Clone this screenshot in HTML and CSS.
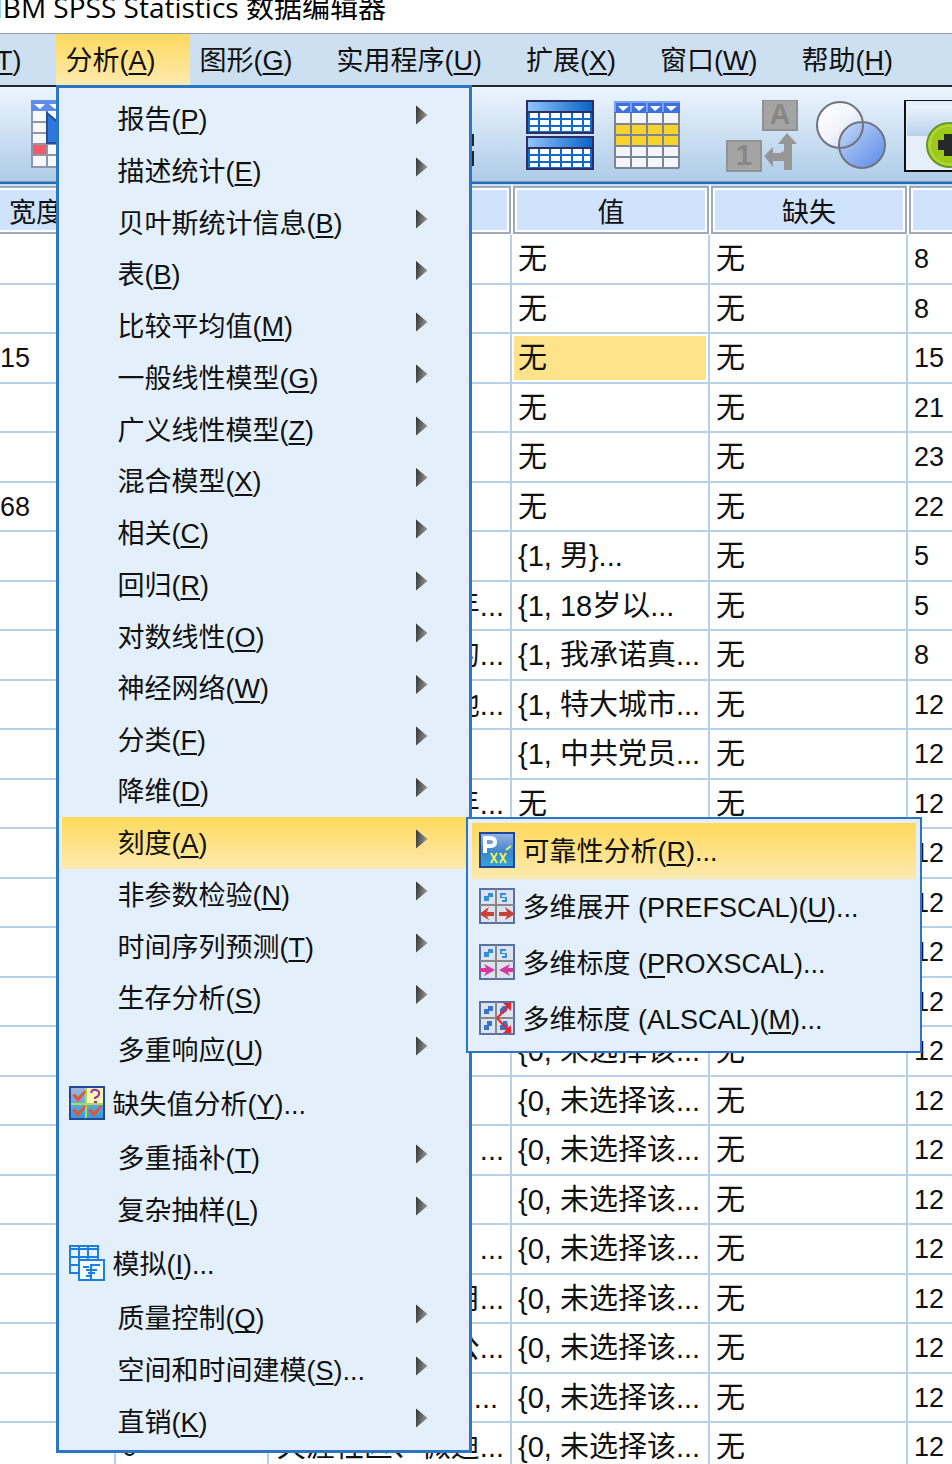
FILE: index.html
```html
<!DOCTYPE html>
<html lang="zh-CN">
<head>
<meta charset="utf-8">
<title>IBM SPSS Statistics 数据编辑器</title>
<link rel="stylesheet" href="styles.css">
</head>
<body>
<div class="window">
<header class="titlebar">IBM SPSS Statistics 数据编辑器</header>

<nav>
<ul class="menubar">
  <li><button class="menubar-item">转换(<u>T</u>)</button></li>
  <li class="open"><button class="menubar-item">分析(<u>A</u>)</button>
    <ul class="menu">
      <li><button class="item sub"><span>报告(<u>P</u>)</span></button></li>
      <li><button class="item sub"><span>描述统计(<u>E</u>)</span></button></li>
      <li><button class="item sub"><span>贝叶斯统计信息(<u>B</u>)</span></button></li>
      <li><button class="item sub short"><span>表(<u>B</u>)</span></button></li>
      <li><button class="item sub"><span>比较平均值(<u>M</u>)</span></button></li>
      <li><button class="item sub"><span>一般线性模型(<u>G</u>)</span></button></li>
      <li><button class="item sub"><span>广义线性模型(<u>Z</u>)</span></button></li>
      <li><button class="item sub short"><span>混合模型(<u>X</u>)</span></button></li>
      <li><button class="item sub"><span>相关(<u>C</u>)</span></button></li>
      <li><button class="item sub"><span>回归(<u>R</u>)</span></button></li>
      <li><button class="item sub"><span>对数线性(<u>O</u>)</span></button></li>
      <li><button class="item sub short"><span>神经网络(<u>W</u>)</span></button></li>
      <li><button class="item sub"><span>分类(<u>F</u>)</span></button></li>
      <li><button class="item sub short"><span>降维(<u>D</u>)</span></button></li>
      <li class="has-submenu"><button class="item sub selected"><span>刻度(<u>A</u>)</span></button>
        <ul class="menu submenu">
          <li><button class="item with-icon selected">
            <svg class="icon" viewBox="0 0 36 36"><defs><linearGradient id="rel" x1="0" y1="0" x2="0" y2="1"><stop offset="0" stop-color="#9ab4e4"/><stop offset=".55" stop-color="#3f86cc"/><stop offset="1" stop-color="#35a3d8"/></linearGradient></defs><rect x="1" y="1" width="34" height="34" fill="url(#rel)" stroke="#1b489c" stroke-width="2"/><path d="M6 21V6h5q5 0 5 4t-5 4H8" fill="none" stroke="#fff" stroke-width="4"/><path d="M12 21l6 10M18 21l-6 10M21 21l6 10M27 21l-6 10M27 18l5-4" fill="none" stroke="#e9f25a" stroke-width="2"/></svg>
            <span>可靠性分析(<u>R</u>)...</span></button></li>
          <li><button class="item with-icon">
            <svg class="icon" viewBox="0 0 36 36"><rect x="1" y="1" width="34" height="34" fill="#dce3ef" stroke="#5a71a2" stroke-width="2"/><path d="M17 1v34M1 17h34" stroke="#888" stroke-width="2"/><path d="M5 8h4V5h5v4h-4v4H5zM21 5h6v2h-4v2h5v5h-5v-2h3v-2h-5z" fill="#3190da"/><path d="M0 26l10-7-2 5h7v4H8l2 4zM36 26l-10-7 2 5h-8v4h8l-2 4z" fill="#c9403c"/></svg>
            <span>多维展开 (PREFSCAL)(<u>U</u>)...</span></button></li>
          <li><button class="item with-icon">
            <svg class="icon" viewBox="0 0 36 36"><rect x="1" y="1" width="34" height="34" fill="#dce3ef" stroke="#5a71a2" stroke-width="2"/><path d="M17 1v34M1 17h34" stroke="#888" stroke-width="2"/><path d="M5 8h4V5h5v4h-4v4H5zM21 5h6v2h-4v2h5v5h-5v-2h3v-2h-5z" fill="#3190da"/><path d="M16 26l-11-6 2 4H1v4h6l-2 4zM20 26l11-6-2 4h6v4h-6l2 4z" fill="#d33a9b"/></svg>
            <span>多维标度 (<u>P</u>ROXSCAL)...</span></button></li>
          <li><button class="item with-icon">
            <svg class="icon" viewBox="0 0 36 36"><rect x="1" y="2" width="34" height="32" fill="#dce3ef" stroke="#5a71a2" stroke-width="2"/><path d="M17 2v32M1 18h34" stroke="#888" stroke-width="2"/><path d="M5 9h4V6h5v5h-4v3H5zM21 9l3-3h4v5l-4 3h-3zM5 25h3v-4h5v5h-3v4H5zM21 25h3v-4h4l2 9h-9z" fill="#3572d1"/><path d="M18 18L29 7M18 18l11 12" stroke="#ee2128" stroke-width="2"/><path d="M24 3h8v8zM32 25v8h-8z" fill="#ee2128"/></svg>
            <span>多维标度 (ALSCAL)(<u>M</u>)...</span></button></li>
        </ul>
      </li>
      <li><button class="item sub"><span>非参数检验(<u>N</u>)</span></button></li>
      <li><button class="item sub"><span>时间序列预测(<u>T</u>)</span></button></li>
      <li><button class="item sub short"><span>生存分析(<u>S</u>)</span></button></li>
      <li><button class="item sub"><span>多重响应(<u>U</u>)</span></button></li>
      <li><button class="item with-icon">
        <svg class="icon" viewBox="0 0 36 36"><defs><linearGradient id="mis" x1="0" y1="0" x2="0" y2="1"><stop offset="0" stop-color="#a4b6dc"/><stop offset="1" stop-color="#2f9bd6"/></linearGradient></defs><rect x="1" y="2" width="34" height="32" fill="url(#mis)" stroke="#23489b" stroke-width="2"/><path d="M18 3h16v15H18z" fill="#fbf6b4"/><path d="M17 3v30M2 19h32" stroke="#a9dd57" stroke-width="2"/><path d="M22 8q1-4 5-3t3 4q0 2-4 4v1M25 17h3" fill="none" stroke="#9c2d9d" stroke-width="2"/><path d="M3 10l3-1 3 3 7-7 1 2-8 10zM3 25l3-1 3 3 7-7 1 2-8 10zM19 25l3-1 3 3 7-7 1 2-8 10z" fill="#e2533b"/></svg>
        <span>缺失值分析(<u>Y</u>)...</span></button></li>
      <li><button class="item sub"><span>多重插补(<u>T</u>)</span></button></li>
      <li><button class="item sub"><span>复杂抽样(<u>L</u>)</span></button></li>
      <li><button class="item with-icon">
        <svg class="icon" viewBox="0 0 36 36"><path d="M1 1h28v27H1z" fill="#e6f1fd"/><path d="M1 1h28v27H1zM1 4h28M1 12h28M1 20h28M10 1v27M19 1v27" fill="none" stroke="#1a80dd" stroke-width="2"/><path d="M10 15h25v20H10z" fill="#f2f8ff" stroke="#1a80dd" stroke-width="2"/><path d="M14 22h6M22 20h9M17 25h11M19 28h7M17 31h6M22 19v16" stroke="#1a80dd" stroke-width="2"/></svg>
        <span>模拟(<u>I</u>)...</span></button></li>
      <li><button class="item sub"><span>质量控制(<u>Q</u>)</span></button></li>
      <li><button class="item sub"><span>空间和时间建模(<u>S</u>)...</span></button></li>
      <li><button class="item sub"><span>直销(<u>K</u>)</span></button></li>
    </ul>
  </li>
  <li><button class="menubar-item">图形(<u>G</u>)</button></li>
  <li><button class="menubar-item">实用程序(<u>U</u>)</button></li>
  <li><button class="menubar-item">扩展(<u>X</u>)</button></li>
  <li><button class="menubar-item">窗口(<u>W</u>)</button></li>
  <li><button class="menubar-item">帮助(<u>H</u>)</button></li>
</ul>
</nav>

<div class="toolbar">
  <div class="tools">
    <button class="tool" aria-label="转到变量"><svg width="66" height="70" viewBox="0 0 66 70"><path d="M1 1h64v66H1z" fill="#f7f8fc"/><path d="M1 45h15v10H1z" fill="#f25b68"/><path d="M1 22h64M1 33h64M1 44h64M1 55h64M16 1v66M32 1v66M1 1h64v66H1z" fill="none" stroke="#8d96a8" stroke-width="2"/><path d="M0 0h66v11H0z" fill="#5f8ee8"/><path d="M3 4h11l-5 5zM18 4h11l-5 5z" fill="#fff"/><path d="M16 13l14 12v18H16z" fill="#2b79dc" stroke="#234c9d" stroke-width="2"/></svg></button>
  </div>
  <div class="tools tools-find">
    <button class="tool" aria-label="查找"><svg width="60" height="70" viewBox="0 0 60 70"><path d="M36 34h23v32H36zM4 34h23v32H4zM27 40h9v10h-9z" fill="#20252c"/><path d="M57 46h2v5h-2z" fill="#cfd8e0"/></svg></button>
  </div>
  <div class="tools tools-data">
    <button class="tool" aria-label="拆分文件"><svg width="68" height="72" viewBox="0 0 68 72"><defs><linearGradient id="bar"><stop offset="0" stop-color="#8fc4fa"/><stop offset="1" stop-color="#0864c8"/></linearGradient><g id="half"><rect x="1" y="1" width="66" height="32" fill="#fff"/><rect x="2" y="2" width="64" height="10" fill="url(#bar)"/><path d="M3 13v20M13 13v20M24 13v20M35 13v20M46 13v20M57 13v20M65 13v20M2 19h64M2 26h64M2 32h64" stroke="#0f69c9" stroke-width="2"/><path d="M1 12h66M1 1h66v32H1z" fill="none" stroke="#2b2f66" stroke-width="2"/></g></defs><use href="#half"/><use href="#half" y="36"/></svg></button>
    <button class="tool" aria-label="选择个案"><svg width="66" height="70" viewBox="0 0 66 70"><path d="M1 1h64v66H1z" fill="#f3f5fb"/><path d="M1 23h64v21H1z" fill="#f6d32d"/><path d="M1 12v55M17 12v55M33 12v55M49 12v55M65 12v55M1 23h64M1 34h64M1 45h64M1 56h64M1 67h64" stroke="#7c8596" stroke-width="2"/><path d="M0 1h66v11H0z" fill="#3d6fdd"/><path d="M0 1h66M1 1v10M17 1v10M33 1v10M49 1v10" stroke="#7e9ff0" stroke-width="2"/><path d="M4 5h11l-6 5zM20 5h11l-6 5zM36 5h11l-6 5zM52 5h11l-6 5z" fill="#fff"/></svg></button>
  </div>
  <div class="tools tools-view">
    <button class="tool" aria-label="值标签" disabled><svg width="72" height="72" viewBox="0 0 72 72"><path d="M37 0h34v30H37zM1 41h34v30H1z" fill="#a4a4a4" stroke="#929292" stroke-width="2"/><text x="54" y="24" class="glyph">A</text><text x="18" y="65" class="glyph">1</text><path d="M61 33l10 11h-5v26h-8V61H47v6L38 56l9-9v6h7l4-2v-7h-6z" fill="#969696"/></svg></button>
    <button class="tool" aria-label="使用变量集"><svg width="70" height="70" viewBox="0 0 70 70"><defs><linearGradient id="c1" x1="0" y1="0" x2="1" y2="1"><stop offset="0" stop-color="#fff"/><stop offset=".5" stop-color="#f3f5fc"/><stop offset="1" stop-color="#c0cdf0"/></linearGradient><linearGradient id="c2" x1="0" y1="0" x2="1" y2="1"><stop offset="0" stop-color="#c6d6fa"/><stop offset="1" stop-color="#4d82e6"/></linearGradient></defs><circle cx="24" cy="24" r="23" fill="url(#c1)"/><circle cx="46" cy="44" r="23" fill="url(#c2)" fill-opacity=".9"/><path d="M1 24a23 23 0 1046 0 23 23 0 10-46 0M23 44a23 23 0 1046 0 23 23 0 10-46 0" fill="none" stroke="#70747c" stroke-width="2"/></svg></button>
    <button class="tool" aria-label="定制工具栏"><svg width="72" height="72" viewBox="0 0 72 72"><defs><linearGradient id="pg" x1="0" y1="0" x2="0" y2="1"><stop offset="0" stop-color="#eaf3fc"/><stop offset="1" stop-color="#b8d2ec"/></linearGradient></defs><path d="M1 0h70v71H1z" fill="#e5effc"/><path d="M3 6h69v30H3z" fill="url(#pg)"/><path d="M1 0h71v71H1z" fill="none" stroke="#111" stroke-width="2"/><circle cx="45" cy="45" r="22" fill="#b2d235" stroke="#62981d" stroke-width="2"/><circle cx="45" cy="45" r="18" fill="#9dc81c"/><path d="M40 34h10v6h7v10h-7v6H40v-6h-6V40h6z" fill="#26282a"/></svg></button>
  </div>
</div>

<main class="sheet">
<table>
<colgroup><col class="c-width"><col class="c-dec"><col class="c-label"><col class="c-value"><col class="c-missing"><col></colgroup>
<thead><tr><th>宽度</th><th>小数位数</th><th>标签</th><th>值</th><th>缺失</th><th></th></tr></thead>
<tbody>
<tr><td></td><td></td><td></td><td>无</td><td>无</td><td class="num">8</td></tr>
<tr><td></td><td></td><td></td><td>无</td><td>无</td><td class="num">8</td></tr>
<tr><td class="num first">15</td><td></td><td></td><td class="current">无</td><td>无</td><td class="num">15</td></tr>
<tr><td></td><td></td><td></td><td>无</td><td>无</td><td class="num">21</td></tr>
<tr><td></td><td></td><td></td><td>无</td><td>无</td><td class="num">23</td></tr>
<tr><td class="num first">68</td><td></td><td></td><td>无</td><td>无</td><td class="num">22</td></tr>
<tr><td></td><td></td><td></td><td>{1, 男}...</td><td>无</td><td class="num">5</td></tr>
<tr><td></td><td></td><td class="label">年...</td><td>{1, 18岁以...</td><td>无</td><td class="num">5</td></tr>
<tr><td></td><td></td><td class="label">的...</td><td>{1, 我承诺真...</td><td>无</td><td class="num">8</td></tr>
<tr><td></td><td></td><td class="label">地...</td><td>{1, 特大城市...</td><td>无</td><td class="num">12</td></tr>
<tr><td></td><td></td><td></td><td>{1, 中共党员...</td><td>无</td><td class="num">12</td></tr>
<tr><td></td><td></td><td class="label">年...</td><td>无</td><td>无</td><td class="num">12</td></tr>
<tr><td></td><td></td><td></td><td>无</td><td>无</td><td class="num">12</td></tr>
<tr><td></td><td></td><td></td><td>无</td><td>无</td><td class="num">12</td></tr>
<tr><td></td><td></td><td></td><td>无</td><td>无</td><td class="num">12</td></tr>
<tr><td></td><td></td><td></td><td>无</td><td>无</td><td class="num">12</td></tr>
<tr><td></td><td></td><td></td><td>{0, 未选择该...</td><td>无</td><td class="num">12</td></tr>
<tr><td></td><td></td><td></td><td>{0, 未选择该...</td><td>无</td><td class="num">12</td></tr>
<tr><td></td><td></td><td class="label">...</td><td>{0, 未选择该...</td><td>无</td><td class="num">12</td></tr>
<tr><td></td><td></td><td></td><td>{0, 未选择该...</td><td>无</td><td class="num">12</td></tr>
<tr><td></td><td></td><td class="label">...</td><td>{0, 未选择该...</td><td>无</td><td class="num">12</td></tr>
<tr><td></td><td></td><td class="label">用...</td><td>{0, 未选择该...</td><td>无</td><td class="num">12</td></tr>
<tr><td></td><td></td><td class="label">公...</td><td>{0, 未选择该...</td><td>无</td><td class="num">12</td></tr>
<tr><td></td><td></td><td class="label wide">...</td><td>{0, 未选择该...</td><td>无</td><td class="num">12</td></tr>
<tr><td></td><td class="num">0</td><td class="label">天涯社区、微迪...</td><td>{0, 未选择该...</td><td>无</td><td class="num">12</td></tr>
</tbody>
</table>
</main>
</div>
</body>
</html>
```
FILE: styles.css
```css
* { box-sizing: border-box; }

body {
  margin: 0;
  background: #fff;
  color: #111;
  font-family: "Liberation Sans", "Noto Sans CJK SC", sans-serif;
  font-size: 27px;
}

button {
  border: 0;
  padding: 0;
  background: none;
  color: inherit;
  font: inherit;
  text-align: left;
  white-space: nowrap;
}

ul { list-style: none; margin: 0; padding: 0; }

u {
  text-decoration-thickness: 2px;
  text-underline-offset: 3px;
  text-decoration-skip-ink: none;
}

.window {
  display: flex;
  flex-direction: column;
  height: 100vh;
  overflow: hidden;
}

.titlebar {
  flex: none;
  height: 33px;
  margin-left: -5px;
  line-height: 14px;
  font-family: "Open Sans", "Noto Sans CJK SC", sans-serif;
  font-size: 28px;
  white-space: nowrap;
  color: #000;
}

/* menu bar */
.menubar {
  display: flex;
  height: 54px;
  border-top: 1px solid #8f9daf;
  border-bottom: 2px solid #20262c;
  background: #cde0f2;
}
.menubar > li { position: relative; flex: none; }
.menubar > li:first-child { margin-left: -77px; }
.menubar-item {
  height: 51px;
  padding: 0 34px 2px 10px;
}
.open > .menubar-item { background: linear-gradient(#ffd95e, #fdeaae); }

/* drop-down menus */
.menu {
  position: absolute;
  z-index: 2;
  top: 100%;
  left: 0;
  width: 416px;
  padding: 5px 3px 2px;
  border: 3px solid #2777c5;
  background: #e3effb;
  box-shadow: inset 0 0 0 3px #e9ecfa;
}
.item {
  display: flex;
  align-items: center;
  width: 100%;
  height: 52px;
  padding: 0 0 4px 56px;
}
.item.short { height: 51px; }
.item.with-icon {
  gap: 8px;
  height: 56px;
  padding: 0 0 3px 7px;
}
.item.selected { background: linear-gradient(#ffd95a, #fdeab0); }
.item.sub::after {
  content: "";
  width: 12px;
  height: 20px;
  margin: 0 38px 4px auto;
  background: linear-gradient(100deg, #333, #aaa);
  clip-path: polygon(0 0, 100% 50%, 0 100%);
}
.icon { flex: none; width: 36px; height: 36px; }
.has-submenu { position: relative; }
.submenu {
  top: 0;
  left: 100%;
  width: 456px;
  padding: 4px;
  border-width: 2px;
}

/* toolbar */
.toolbar {
  display: flex;
  flex: none;
  align-items: flex-start;
  height: 97px;
  padding: 13px 0 0 31px;
  border-bottom: 2px solid #1c6dbb;
  background: linear-gradient(#ecf5fe, #aecbe7);
  box-shadow: inset 0 -1px #8c98a5;
  overflow: hidden;
}
.tools { display: flex; flex: none; gap: 20px; }
.tools-find { margin-left: 318px; }
.tools-data { margin-left: 51px; }
.tools-view { gap: 18px; margin-left: 46px; }
.tool svg { display: block; }
.glyph {
  font: bold 29px "Liberation Sans", sans-serif;
  text-anchor: middle;
  fill: #878787;
}

/* variable grid, scrolled sideways inside the window */
.sheet { flex: 1; min-height: 0; overflow: hidden; }
table {
  width: calc(100% + 184px);
  margin-left: -44px;
  table-layout: fixed;
  border-collapse: separate;
  border-spacing: 0;
}
.c-width { width: 160px; }
.c-dec { width: 153px; }
.c-label { width: 243px; }
.c-value, .c-missing { width: 198px; }
th {
  height: 51px;
  padding: 0;
  border: 1px solid #fff;
  border-top: 2px solid #c9ddf3;
  background: #cfe3fc;
  box-shadow: inset 0 0 0 2px #9faabb, inset 0 0 0 4px #fff;
  font-weight: normal;
}
td {
  height: 50px;
  padding: 0 0 0 6px;
  border-right: 2px solid #b7d1e9;
  border-bottom: 2px solid #b7d1e9;
  line-height: 40px;
  font-size: 29px;
  white-space: nowrap;
  overflow: hidden;
}
tr:nth-child(even) td { height: 49px; }
td.num { font-size: 27px; }
td.first { padding-left: 44px; }
td.label { padding-right: 6px; text-align: right; }
td.wide { padding-right: 12px; }
.current {
  background: #fee38a;
  box-shadow: inset 0 0 0 2px #fff;
}
```
